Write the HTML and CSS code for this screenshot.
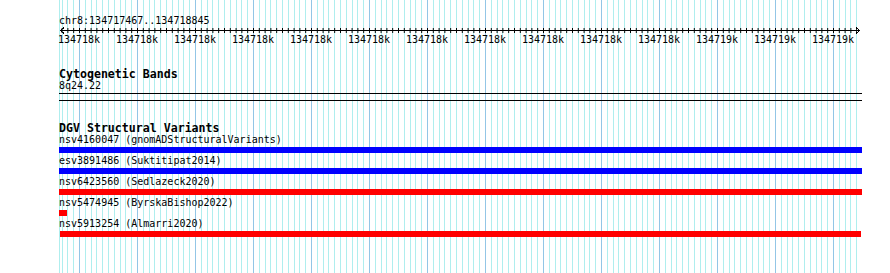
FILE: index.html
```html
<!DOCTYPE html>
<html lang="en">
<head>
  <meta charset="UTF-8">
  <title>chr8:134717467..134718845</title>
  <link rel="stylesheet" href="styles.css">
</head>
<body>
  <div class="view">
    <!-- grid lines behind the tracks -->
    <svg class="grid" width="890" height="273" shape-rendering="crispEdges">
      <defs>
        <pattern id="gridCols" patternUnits="userSpaceOnUse" x="79" y="0" width="58" height="273">
          <line x1="0.5" y1="0" x2="0.5" y2="273" stroke="#93c6e6"/>
          <line x1="6.3" y1="0" x2="6.3" y2="273" stroke="#afeeee"/>
          <line x1="12.1" y1="0" x2="12.1" y2="273" stroke="#afeeee"/>
          <line x1="17.9" y1="0" x2="17.9" y2="273" stroke="#afeeee"/>
          <line x1="23.7" y1="0" x2="23.7" y2="273" stroke="#afeeee"/>
          <line x1="29.5" y1="0" x2="29.5" y2="273" stroke="#afeeee"/>
          <line x1="35.3" y1="0" x2="35.3" y2="273" stroke="#afeeee"/>
          <line x1="41.1" y1="0" x2="41.1" y2="273" stroke="#afeeee"/>
          <line x1="46.9" y1="0" x2="46.9" y2="273" stroke="#afeeee"/>
          <line x1="52.7" y1="0" x2="52.7" y2="273" stroke="#afeeee"/>
        </pattern>
      </defs>
      <line x1="59.5" y1="0" x2="59.5" y2="273" stroke="#afeeee"/>
      <rect x="62" y="0" width="795" height="273" fill="url(#gridCols)"/>
    </svg>

    <div class="overview">
      <div class="locus">chr8:134717467..134718845</div>
      <svg class="ruler" width="803" height="7" shape-rendering="crispEdges">
        <defs>
          <pattern id="rulerTicks" patternUnits="userSpaceOnUse" x="20" y="0" width="5.8" height="7">
            <line x1="0.5" y1="1" x2="0.5" y2="6" stroke="#000"/>
          </pattern>
        </defs>
        <line x1="1" y1="3.5" x2="801" y2="3.5" stroke="#000"/>
        <rect x="2" y="0" width="796" height="7" fill="url(#rulerTicks)"/>
        <polyline points="5,0.5 1.5,3.5 5,6.5" fill="none" stroke="#000"/>
        <polyline points="797,0.5 800.5,3.5 797,6.5" fill="none" stroke="#000"/>
      </svg>
      <div class="scale">
        <span>134718k</span><span>134718k</span><span>134718k</span><span>134718k</span>
        <span>134718k</span><span>134718k</span><span>134718k</span><span>134718k</span>
        <span>134718k</span><span>134718k</span><span>134718k</span><span>134719k</span>
        <span>134719k</span><span>134719k</span>
      </div>
    </div>

    <section class="track cyto">
      <h3>Cytogenetic Bands</h3>
      <div class="label">8q24.22</div>
      <div class="rule first"></div>
      <div class="rule"></div>
    </section>

    <section class="track dgv">
      <h3>DGV Structural Variants</h3>
      <div class="feature">
        <div class="label">nsv4160047 (gnomADStructuralVariants)</div>
        <div class="bar gain" style="margin-left:0;width:803px"></div>
      </div>
      <div class="feature">
        <div class="label">esv3891486 (Suktitipat2014)</div>
        <div class="bar gain" style="margin-left:0;width:803px"></div>
      </div>
      <div class="feature">
        <div class="label">nsv6423560 (Sedlazeck2020)</div>
        <div class="bar loss" style="margin-left:0;width:803px"></div>
      </div>
      <div class="feature">
        <div class="label">nsv5474945 (ByrskaBishop2022)</div>
        <div class="bar loss" style="margin-left:0;width:8px"></div>
      </div>
      <div class="feature">
        <div class="label">nsv5913254 (Almarri2020)</div>
        <div class="bar loss" style="margin-left:1px;width:801px"></div>
      </div>
    </section>
  </div>
</body>
</html>
```

FILE: styles.css
```css
body {
  margin: 0;
  background: #fff;
  font-family: 'DejaVu Sans Mono', monospace;
  font-size: 10px;
  color: #000;
  overflow: hidden;
}
.view {
  position: relative;
  width: 890px;
  height: 273px;
}
.grid {
  position: absolute;
  top: 0;
  left: 0;
  z-index: 0;
}
.overview,
.track {
  position: relative;
  z-index: 1;
  padding-left: 59px;
}
.locus {
  padding-top: 15px;
  line-height: 12px;
}
.ruler {
  display: block;
}
.scale {
  display: flex;
  margin-left: -9px;
  line-height: 12px;
}
.scale span {
  width: 58px;
  text-align: center;
  flex: none;
}
.track h3 {
  margin: 0;
  font-size: 11.6px;
  font-weight: bold;
  line-height: 12px;
}
.cyto h3 {
  margin-top: 22px;
}
.label {
  line-height: 12px;
  white-space: nowrap;
}
.rule {
  width: 803px;
  height: 1px;
  background: #000;
  margin-top: 6px;
}
.rule.first {
  margin-top: 1px;
}
.dgv h3 {
  margin-top: 21px;
}
.feature {
  margin-bottom: 2px;
}
.bar {
  height: 6px;
  margin-top: 1px;
}
.gain {
  background: #0000ff;
}
.loss {
  background: #ff0000;
}
```
